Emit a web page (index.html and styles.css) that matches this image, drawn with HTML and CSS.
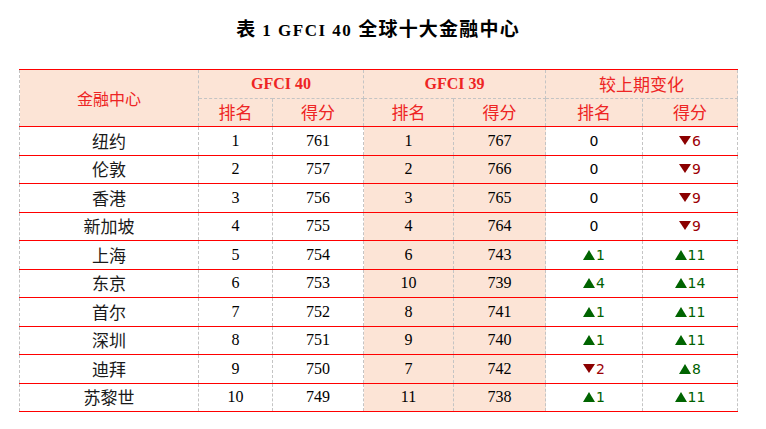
FILE: index.html
```html
<!DOCTYPE html>
<html lang="zh-CN">
<head>
<meta charset="utf-8">
<title>表1 GFCI 40 全球十大金融中心</title>
<link rel="stylesheet" href="styles.css">
</head>
<body>
<div class="page">
  <h1 class="title">表 <span class="lat">1 GFCI 40</span> 全球十大金融中心</h1>
  <table class="rank">
    <colgroup>
      <col class="c-city"><col class="c-r40"><col class="c-s40"><col class="c-r39"><col class="c-s39"><col class="c-dr"><col class="c-ds">
    </colgroup>
    <thead>
      <tr class="h1">
        <th rowspan="2" class="cityh">金融中心</th>
        <th colspan="2" class="gf">GFCI 40</th>
        <th colspan="2" class="gf">GFCI 39</th>
        <th colspan="2">较上期变化</th>
      </tr>
      <tr class="h2">
        <th>排名</th><th>得分</th><th>排名</th><th>得分</th><th>排名</th><th>得分</th>
      </tr>
    </thead>
    <tbody>
      <tr><td class="city">纽约</td><td>1</td><td>761</td><td class="old">1</td><td class="old">767</td><td class="chg">0</td><td class="chg"><span class="dn"><svg class="tri-dn" viewBox="0 0 12 9"><path d="M0 0H12L6 9Z"/></svg>6</span></td></tr>
      <tr><td class="city">伦敦</td><td>2</td><td>757</td><td class="old">2</td><td class="old">766</td><td class="chg">0</td><td class="chg"><span class="dn"><svg class="tri-dn" viewBox="0 0 12 9"><path d="M0 0H12L6 9Z"/></svg>9</span></td></tr>
      <tr><td class="city">香港</td><td>3</td><td>756</td><td class="old">3</td><td class="old">765</td><td class="chg">0</td><td class="chg"><span class="dn"><svg class="tri-dn" viewBox="0 0 12 9"><path d="M0 0H12L6 9Z"/></svg>9</span></td></tr>
      <tr><td class="city">新加坡</td><td>4</td><td>755</td><td class="old">4</td><td class="old">764</td><td class="chg">0</td><td class="chg"><span class="dn"><svg class="tri-dn" viewBox="0 0 12 9"><path d="M0 0H12L6 9Z"/></svg>9</span></td></tr>
      <tr><td class="city">上海</td><td>5</td><td>754</td><td class="old">6</td><td class="old">743</td><td class="chg"><span class="up"><svg class="tri-up" viewBox="0 0 12 10"><path d="M6 0L12 10H0Z"/></svg>1</span></td><td class="chg"><span class="up"><svg class="tri-up" viewBox="0 0 12 10"><path d="M6 0L12 10H0Z"/></svg>11</span></td></tr>
      <tr><td class="city">东京</td><td>6</td><td>753</td><td class="old">10</td><td class="old">739</td><td class="chg"><span class="up"><svg class="tri-up" viewBox="0 0 12 10"><path d="M6 0L12 10H0Z"/></svg>4</span></td><td class="chg"><span class="up"><svg class="tri-up" viewBox="0 0 12 10"><path d="M6 0L12 10H0Z"/></svg>14</span></td></tr>
      <tr><td class="city">首尔</td><td>7</td><td>752</td><td class="old">8</td><td class="old">741</td><td class="chg"><span class="up"><svg class="tri-up" viewBox="0 0 12 10"><path d="M6 0L12 10H0Z"/></svg>1</span></td><td class="chg"><span class="up"><svg class="tri-up" viewBox="0 0 12 10"><path d="M6 0L12 10H0Z"/></svg>11</span></td></tr>
      <tr><td class="city">深圳</td><td>8</td><td>751</td><td class="old">9</td><td class="old">740</td><td class="chg"><span class="up"><svg class="tri-up" viewBox="0 0 12 10"><path d="M6 0L12 10H0Z"/></svg>1</span></td><td class="chg"><span class="up"><svg class="tri-up" viewBox="0 0 12 10"><path d="M6 0L12 10H0Z"/></svg>11</span></td></tr>
      <tr><td class="city">迪拜</td><td>9</td><td>750</td><td class="old">7</td><td class="old">742</td><td class="chg"><span class="dn"><svg class="tri-dn" viewBox="0 0 12 9"><path d="M0 0H12L6 9Z"/></svg>2</span></td><td class="chg"><span class="up"><svg class="tri-up" viewBox="0 0 12 10"><path d="M6 0L12 10H0Z"/></svg>8</span></td></tr>
      <tr><td class="city">苏黎世</td><td>10</td><td>749</td><td class="old">11</td><td class="old">738</td><td class="chg"><span class="up"><svg class="tri-up" viewBox="0 0 12 10"><path d="M6 0L12 10H0Z"/></svg>1</span></td><td class="chg"><span class="up"><svg class="tri-up" viewBox="0 0 12 10"><path d="M6 0L12 10H0Z"/></svg>11</span></td></tr>
    </tbody>
  </table>
</div>
</body>
</html>
```

FILE: styles.css
```css
html, body {
  margin: 0;
  padding: 0;
  background: #ffffff;
}

.page {
  width: 718px;
  padding: 20px 0 0 19px;
}

.title {
  margin: 0 0 29px 0;
  height: 20px;
  font-family: "Liberation Serif", "Noto Sans CJK SC", serif;
  font-weight: bold;
  font-size: 19px;
  line-height: 20px;
  letter-spacing: 1.2px;
  text-align: center;
  color: #000000;
  white-space: pre;
}

.title .lat {
  font-size: 17px;
  letter-spacing: 1.5px;
}

.rank {
  width: 718px;
  border-collapse: collapse;
  table-layout: fixed;
  font-family: "Liberation Serif", "Noto Sans CJK SC", serif;
  font-size: 16px;
  color: #000000;
  border-top: 1px solid #ff0000;
  border-left: 1px dashed #c4c4c4;
  border-right: 1px dashed #c4c4c4;
}

.c-city { width: 179px; }
.c-r40 { width: 74px; }
.c-s40 { width: 91px; }
.c-r39 { width: 90px; }
.c-s39 { width: 92px; }
.c-dr { width: 97px; }
.c-ds { width: 95px; }

.rank th,
.rank td {
  padding: 0;
  text-align: center;
  vertical-align: middle;
  border-left: 1px dashed #c4c4c4;
  border-right: 1px dashed #c4c4c4;
  border-bottom: 1px solid #ff0000;
}

.rank th {
  background: #fce4d6;
  color: #ee2424;
  font-family: "Noto Sans CJK SC", sans-serif;
  font-weight: normal;
  font-size: 17px;
  height: 27.5px;
  line-height: 20px;
}

.rank .h1 th {
  border-bottom: 1px dashed #c4c4c4;
}

.rank .h1 th.cityh {
  border-bottom: 1px solid #ff0000;
  font-size: 16px;
}

.rank th.gf {
  font-family: "Liberation Serif", serif;
  font-weight: bold;
  font-size: 16px;
}

.rank td {
  height: 27.5px;
  line-height: 20px;
}

.rank td.city {
  font-family: "Noto Sans CJK SC", sans-serif;
  font-size: 17px;
  color: #1a1a1a;
}

.rank td.old {
  background: #fce4d6;
}

.rank td.chg {
  font-family: "DejaVu Sans", sans-serif;
  font-size: 14px;
}

.up {
  color: #006100;
}

.dn {
  color: #9c0006;
}

.tri-up {
  width: 12px;
  height: 10px;
  margin-right: 1px;
  vertical-align: 0;
  fill: #006400;
}

.tri-dn {
  width: 12px;
  height: 9px;
  margin-right: 1px;
  vertical-align: 1px;
  fill: #8b0000;
}
```
